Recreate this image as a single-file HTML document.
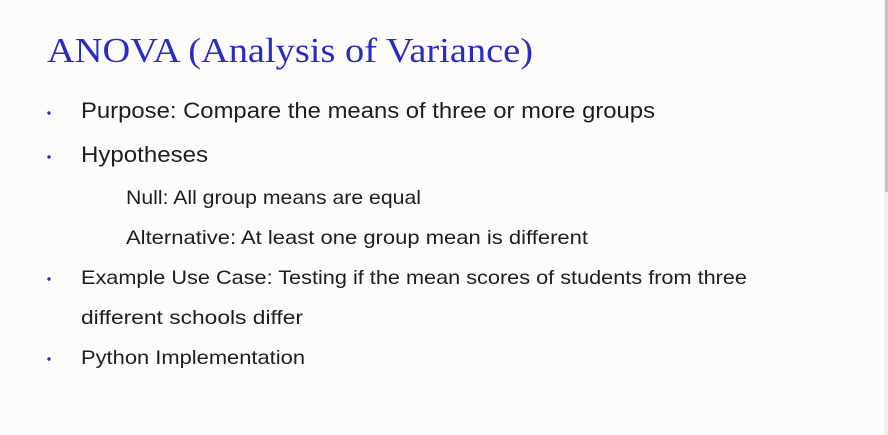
<!DOCTYPE html>
<html><head><meta charset="utf-8"><style>
html,body{margin:0;padding:0;background:#fdfdfd;width:888px;height:435px;overflow:hidden}
svg{display:block}
.t{font-family:"Liberation Sans",sans-serif;fill:#1e1e1e}
</style></head><body>
<svg width="888" height="435" viewBox="0 0 888 435">
<rect x="0" y="0" width="884" height="435" fill="#fcfcfc"/>
<rect x="884" y="0" width="4" height="435" fill="#f0f0f0"/>
<rect x="885" y="0" width="3" height="192" fill="#c2c2c2"/>
<text x="47" y="62" font-family="'Liberation Serif',serif" font-size="35" fill="#2a2ac4" textLength="486" lengthAdjust="spacingAndGlyphs">ANOVA (Analysis of Variance)</text>
<g fill="#2a2ac4">
<circle cx="49" cy="113" r="1.7"/>
<circle cx="49" cy="157" r="1.7"/>
<circle cx="49" cy="279" r="1.7"/>
<circle cx="49" cy="359" r="1.7"/>
</g>
<text class="t" x="81" y="118" font-size="22" textLength="574" lengthAdjust="spacingAndGlyphs">Purpose: Compare the means of three or more groups</text>
<text class="t" x="81" y="162" font-size="22" textLength="127" lengthAdjust="spacingAndGlyphs">Hypotheses</text>
<text class="t" x="126" y="204" font-size="19.5" textLength="295" lengthAdjust="spacingAndGlyphs">Null: All group means are equal</text>
<text class="t" x="126" y="244" font-size="19.5" textLength="462" lengthAdjust="spacingAndGlyphs">Alternative: At least one group mean is different</text>
<text class="t" x="81" y="284" font-size="19.5" textLength="666" lengthAdjust="spacingAndGlyphs">Example Use Case: Testing if the mean scores of students from three</text>
<text class="t" x="81" y="324" font-size="19.5" textLength="222" lengthAdjust="spacingAndGlyphs">different schools differ</text>
<text class="t" x="81" y="364" font-size="19.5" textLength="224" lengthAdjust="spacingAndGlyphs">Python Implementation</text>
</svg>
</body></html>
